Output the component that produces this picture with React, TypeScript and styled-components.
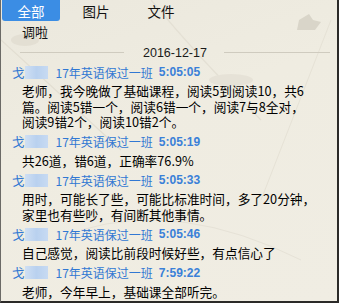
import React from "react";
import styled, { createGlobalStyle } from "styled-components";

const Global = createGlobalStyle`
  html, body { margin: 0; padding: 0; background: #efece1; }
  body { font-family: "Noto Sans CJK SC", "Liberation Sans", sans-serif; }
`;

const Frame = styled.div`
  position: relative;
  width: 339px;
  height: 303px;
  box-sizing: border-box;
  background: linear-gradient(160deg, #ebe8dd 0%, #efece1 40%, #f0ede3 100%);
  border-left: 1px solid #6b6a66;
  border-right: 2px solid #2b2a28;
  border-bottom: 2px solid #2b2a28;
  overflow: hidden;
  display: flex;
  flex-direction: column;
`;

const Backdrop = styled.svg`
  position: absolute;
  left: 0;
  top: 0;
  width: 339px;
  height: 303px;
  pointer-events: none;
`;

const Content = styled.div`
  position: relative;
  display: flex;
  flex-direction: column;
`;

const TabBar = styled.div`
  display: flex;
  gap: 7px;
  padding-left: 1px;
  height: 21px;
`;

const Tab = styled.div<{ $active?: boolean }>`
  width: 58px;
  height: 21px;
  display: flex;
  align-items: center;
  justify-content: center;
  font-size: 13.5px;
  color: ${(p) => (p.$active ? "#ffffff" : "#111")};
  background: ${(p) => (p.$active ? "#3b8de4" : "transparent")};
  border-radius: 0 0 3px 3px;
`;

const Note = styled.div`
  padding-left: 21px;
  height: 22px;
  line-height: 22px;
  font-size: 13px;
  color: #111;
`;

const DateRow = styled.div`
  display: flex;
  align-items: center;
  height: 19px;
  padding: 0 10px 0 19px;
  white-space: nowrap;
`;

const Rule = styled.div<{ $w: number }>`
  flex: none;
  width: ${(p) => p.$w}px;
  height: 1px;
  background: #cfcbbf;
`;

const DateText = styled.div`
  flex: none;
  font-family: "Liberation Sans", Arial, sans-serif;
  font-size: 12.5px;
  color: #1a1a1a;
  padding: 0 17px 0 19px;
`;

const Messages = styled.div`
  display: flex;
  flex-direction: column;
  padding-top: 1px;
`;

const Block = styled.div`
  display: flex;
  flex-direction: column;
  padding-bottom: 3px;
`;

const NameRow = styled.div`
  display: flex;
  align-items: center;
  height: 18px;
  padding-left: 11px;
  color: #3178d3;
  font-size: 12.5px;
  white-space: nowrap;
`;

const Blur = styled.span`
  display: inline-block;
  width: 23px;
  height: 13px;
  margin: 0 8px 0 0;
  background: linear-gradient(90deg, #cfdff3 0%, #b9d1ef 50%, #c7daf2 100%);
  filter: blur(0.6px);
`;

const Group = styled.span`
  font-size: 12px;
  margin-right: 6px;
`;

const Time = styled.span`
  font-family: "Liberation Sans", Arial, sans-serif;
  font-weight: bold;
  font-size: 12px;
  color: #3a80d8;
`;

const Body = styled.div`
  display: flex;
  flex-direction: column;
  padding-left: 21px;
  margin-top: 2px;
`;

const Line = styled.div`
  height: 15.5px;
  line-height: 15.5px;
  font-size: 12.7px;
  color: #000;
  white-space: nowrap;
`;

const msgs = [
  {
    time: "5:05:05",
    lines: [
      "老师，我今晚做了基础课程，阅读5到阅读10，共6",
      "篇。阅读5错一个，阅读6错一个，阅读7与8全对，",
      "阅读9错2个，阅读10错2个。",
    ],
  },
  { time: "5:05:19", lines: ["共26道，错6道，正确率76.9%"] },
  {
    time: "5:05:33",
    lines: ["用时，可能长了些，可能比标准时间，多了20分钟，", "家里也有些吵，有间断其他事情。"],
  },
  { time: "5:05:46", lines: ["自己感觉，阅读比前段时候好些，有点信心了"] },
  { time: "7:59:22", lines: ["老师，今年早上，基础课全部听完。"] },
];

export default function App() {
  return (
    <>
      <Global />
      <Frame>
        <Backdrop viewBox="0 0 339 303">
          <path d="M0 40 L120 150" stroke="#e2ded2" strokeWidth="1.2" fill="none" />
          <path d="M150 0 Q200 60 260 120" stroke="#e4e0d4" strokeWidth="1.2" fill="none" />
          <path d="M330 20 L260 200" stroke="#e6e2d6" strokeWidth="1" fill="none" />
          <path d="M80 230 Q180 200 300 260" stroke="#e6e2d7" strokeWidth="1" fill="none" />
          <path d="M298 20 l10 -6 l4 6 l8 2 l-6 8 l-18 0 z" fill="#d9d5c9" />
          <ellipse cx="24" cy="40" rx="14" ry="6" fill="#e3dfd3" />
          <ellipse cx="230" cy="80" rx="22" ry="6" fill="#e6e2d7" />
        </Backdrop>
        <Content>
          <TabBar>
            <Tab $active>全部</Tab>
            <Tab>图片</Tab>
            <Tab>文件</Tab>
          </TabBar>
          <Note>调啦</Note>
          <DateRow>
            <Rule $w={104} />
            <DateText>2016-12-17</DateText>
            <Rule $w={106} />
          </DateRow>
          <Messages>
            {msgs.map((m, i) => (
              <Block key={i}>
                <NameRow>
                  <span>戈</span>
                  <Blur />
                  <Group>17年英语保过一班</Group>
                  <Time>{m.time}</Time>
                </NameRow>
                <Body>
                  {m.lines.map((l, j) => (
                    <Line key={j}>{l}</Line>
                  ))}
                </Body>
              </Block>
            ))}
          </Messages>
        </Content>
      </Frame>
    </>
  );
}
